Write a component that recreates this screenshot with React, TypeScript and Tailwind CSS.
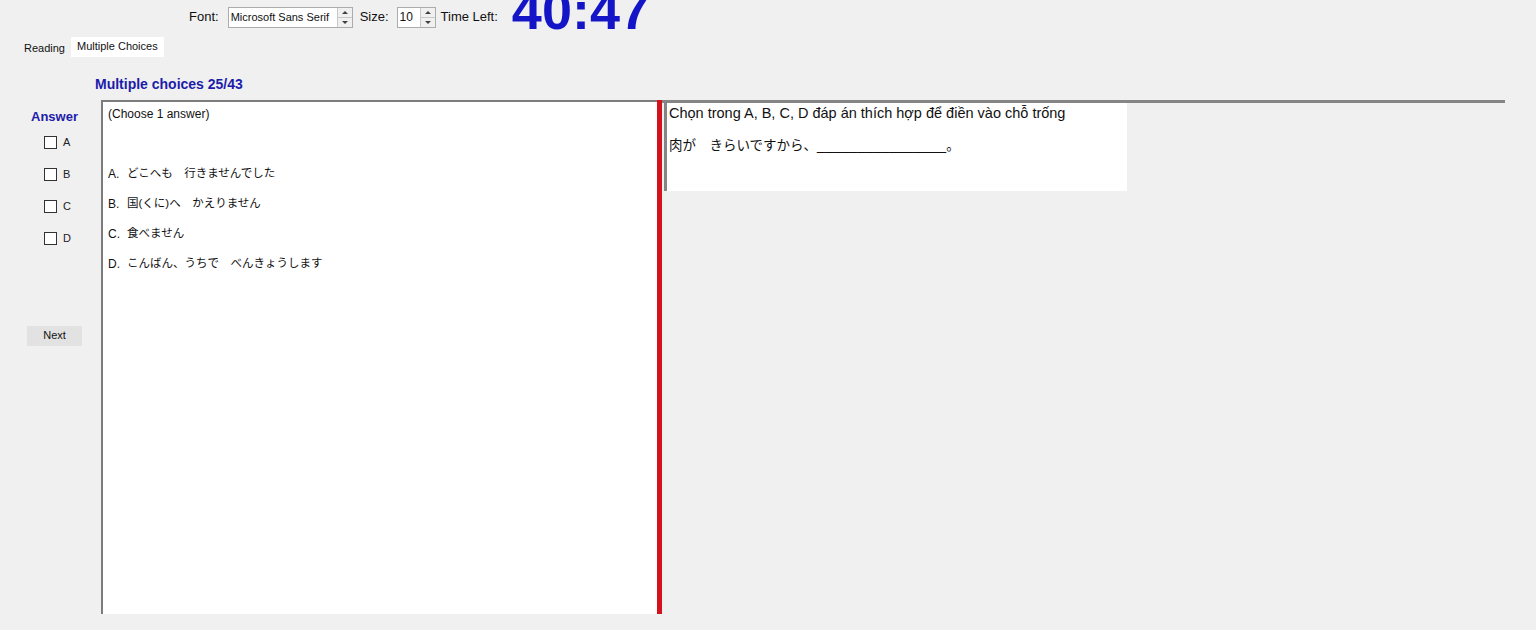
import React from 'react';

const font = { fontFamily: '"Liberation Sans", "Noto Sans CJK JP", sans-serif' };

function Spinner() {
  return (
    <div className="flex h-full w-[15px] flex-col border-l border-[#c8c8c8] bg-[#f0f0f0]">
      <div className="flex flex-1 items-center justify-center border-b border-[#c8c8c8]">
        <div className="h-0 w-0 border-x-[3px] border-b-[3px] border-x-transparent border-b-[#404040]" />
      </div>
      <div className="flex flex-1 items-center justify-center">
        <div className="h-0 w-0 border-x-[3px] border-t-[3px] border-x-transparent border-t-[#404040]" />
      </div>
    </div>
  );
}

function Check({ label }: { label: string }) {
  return (
    <div className="flex h-[32px] items-center gap-[6px] pl-[44px]">
      <div className="h-[13px] w-[13px] border border-[#333] bg-white" />
      <span className="text-[11px] text-[#222]">{label}</span>
    </div>
  );
}

export default function App() {
  const options = [
    ['A.', 'どこへも　行きませんでした'],
    ['B.', '国(くに)へ　かえりません'],
    ['C.', '食べません'],
    ['D.', 'こんばん、うちで　べんきょうします'],
  ];

  return (
    <div className="flex h-[630px] w-[1536px] flex-col overflow-hidden bg-[#f0f0f0] text-[#111]" style={font}>
      {/* toolbar */}
      <div className="flex h-[34px] items-center pl-[189px] text-[13px]">
        <span>Font:</span>
        <div className="ml-[9px] flex h-[21px] w-[125px] items-center border border-[#acacac] bg-white">
          <span className="flex-1 pl-[2px] text-[11px]">Microsoft Sans Serif</span>
          <Spinner />
        </div>
        <span className="ml-[7px]">Size:</span>
        <div className="ml-[8px] flex h-[21px] w-[39px] items-center border border-[#acacac] bg-white">
          <span className="flex-1 pl-[2px] text-[12px]">10</span>
          <Spinner />
        </div>
        <span className="ml-[5px]">Time Left:</span>
        <span className="ml-[14px] mt-[-14px] text-[54px] font-bold leading-none text-[#1515c8]">40:47</span>
      </div>

      {/* tabs */}
      <div className="flex h-[25px] items-center pl-[20px] text-[11px]">
        <span className="px-[4px] pt-[4px]">Reading</span>
        <span className="ml-[2px] flex h-[20px] items-center bg-white px-[6px]">Multiple Choices</span>
      </div>

      <div className="mt-[10px] flex h-[31px] items-center pl-[95px] text-[14px] font-bold text-[#1c1caa]">
        Multiple choices 25/43
      </div>

      {/* main */}
      <div className="flex">
        <div className="flex w-[101px] flex-col">
          <div className="pl-[31px] pt-[7px] text-[13px] font-bold text-[#1c1caa]">Answer</div>
          <div>
            <Check label="A" />
            <Check label="B" />
            <Check label="C" />
            <Check label="D" />
          </div>
          <div className="ml-[27px] mt-[71px] flex h-[20px] w-[55px] items-center justify-center bg-[#e2e2e2] text-[11px]">
            Next
          </div>
        </div>

        <div className="h-[514px] w-[556px] border-l-2 border-t-2 border-[#7c7c7c] bg-white pl-[5px] pt-[3px] text-[12px]">
          <div>(Choose 1 answer)</div>
          <div className="mt-[42px] flex flex-col">
            {options.map(([k, o]) => (
              <div key={k} className="flex h-[30px] items-start whitespace-pre">
                <span className="w-[19px]">{k}</span>
                <span className="text-[11.5px]">{o}</span>
              </div>
            ))}
          </div>
        </div>

        <div className="h-[514px] w-[5px] bg-[#d3121e]" />

        <div className="mr-[31px] flex-1 border-t-[3px] border-[#858585] pl-[2px]">
          <div className="h-[88px] w-[463px] border-l-[3px] border-[#858585] bg-white pl-[2px] text-[14.5px]">
            <div>Chọn trong A, B, C, D đáp án thích hợp để điền vào chỗ trống</div>
            <div className="mt-[10px] flex items-baseline whitespace-pre">
              <span className="text-[13.5px]">肉が　きらいですから、</span>
              <span>________________</span>
              <span className="text-[13.5px]">。</span>
            </div>
          </div>
        </div>
      </div>
    </div>
  );
}
